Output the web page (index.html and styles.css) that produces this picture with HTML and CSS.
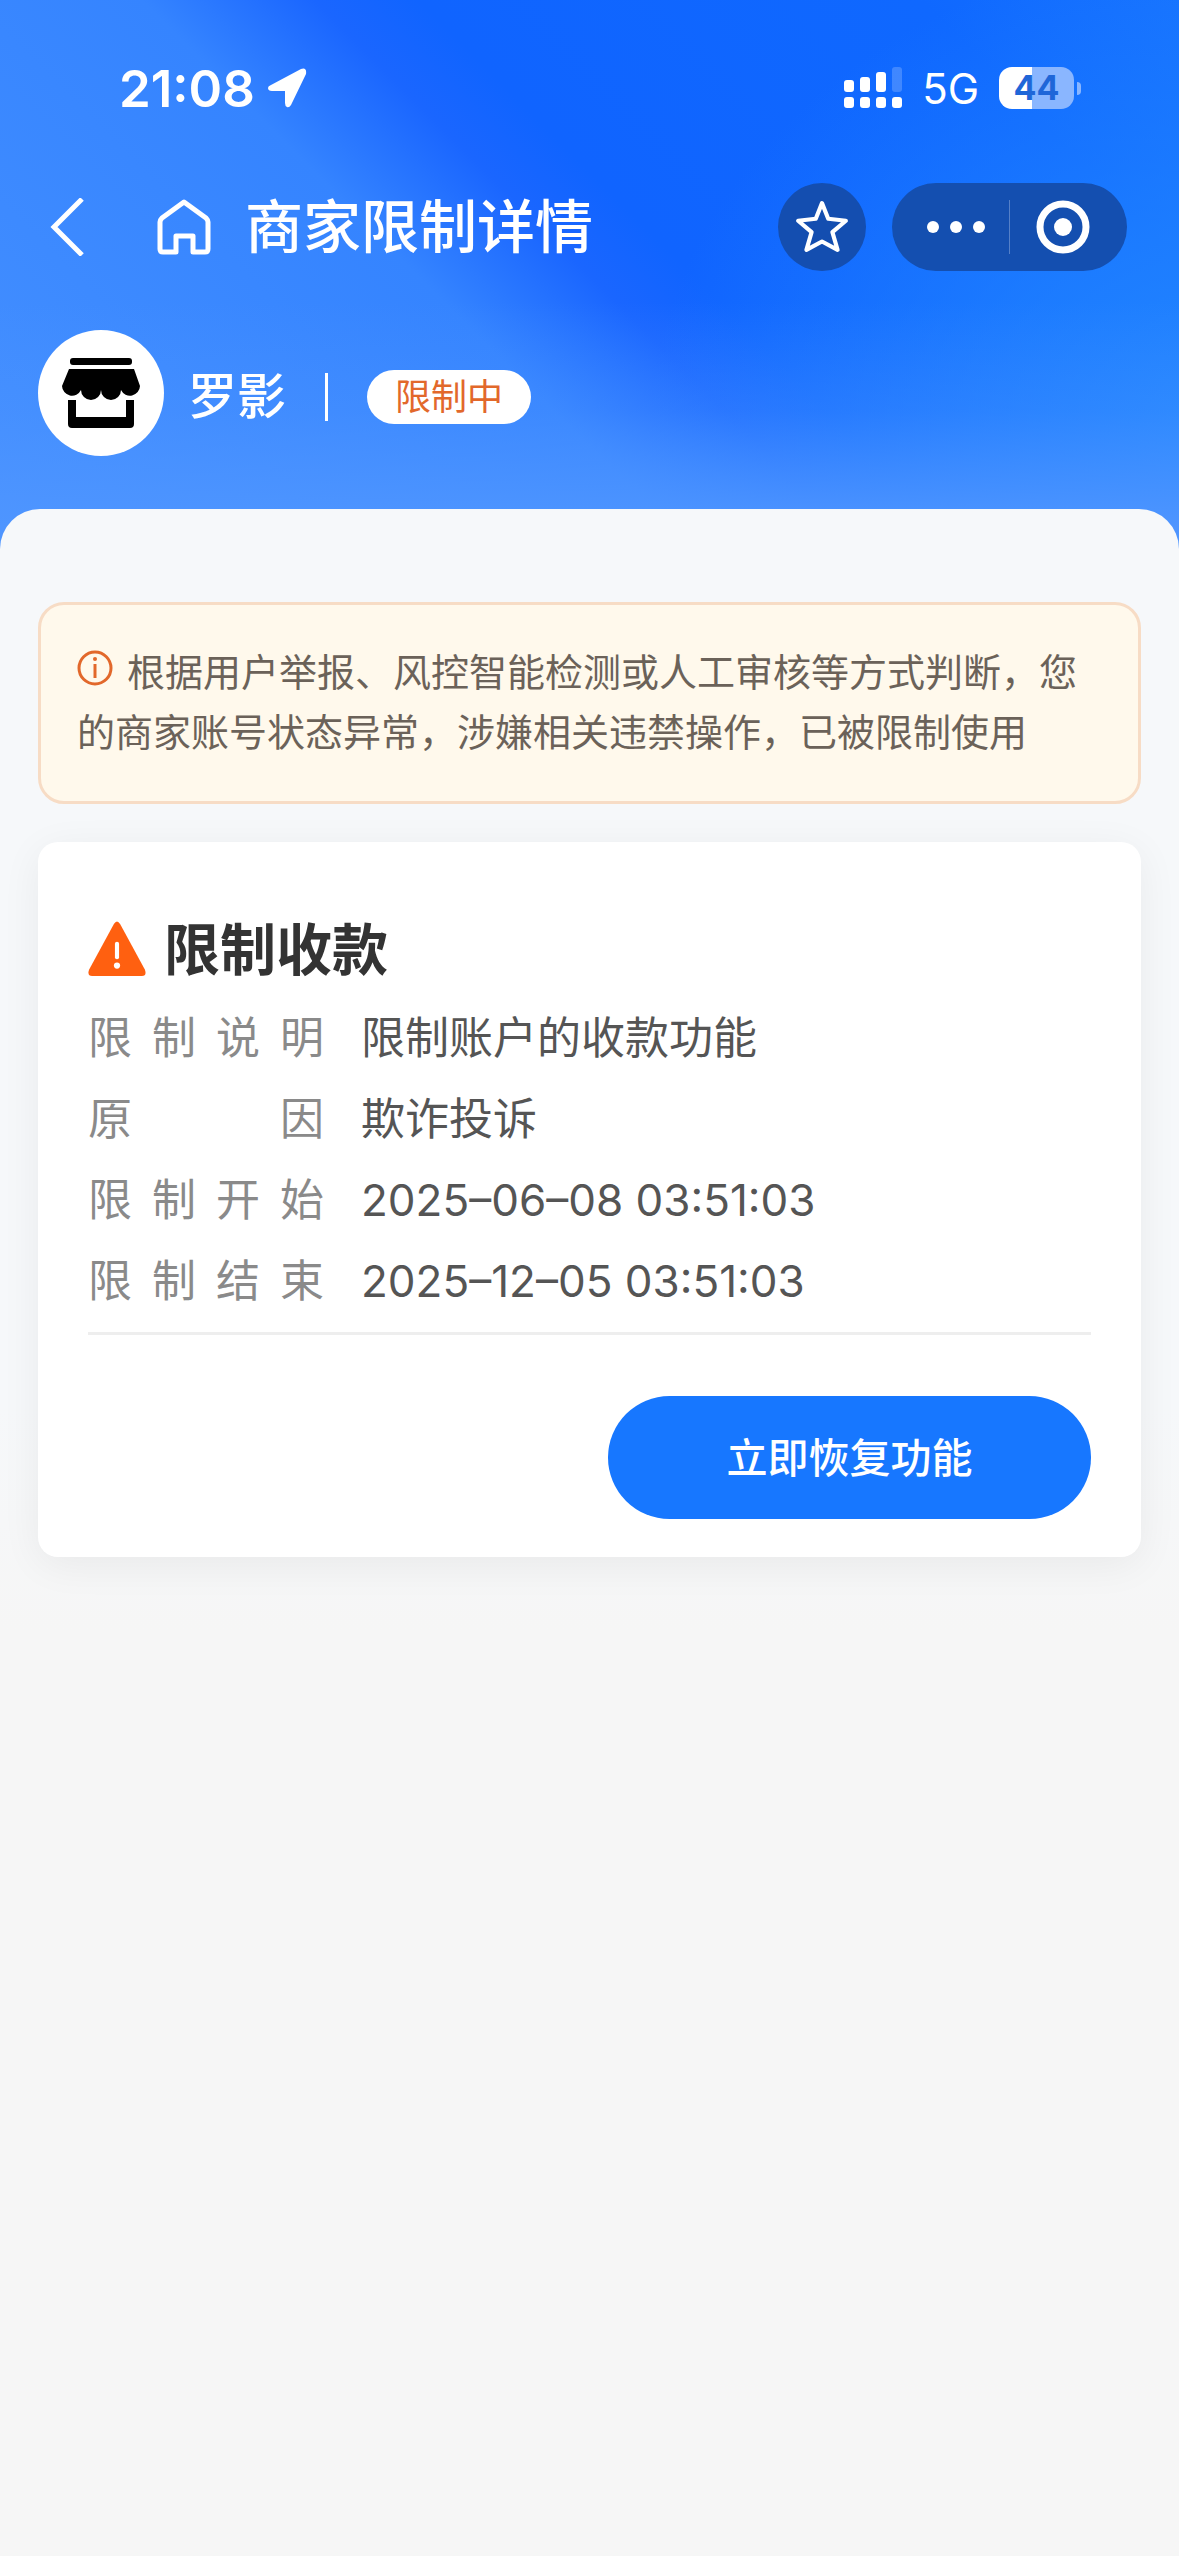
FILE: index.html
```html
<!DOCTYPE html>
<html lang="zh-CN">
<head>
  <meta charset="UTF-8">
  <meta name="viewport" content="width=device-width, initial-scale=1.0">
  <title>商家限制详情</title>
  <link rel="stylesheet" href="styles.css">
</head>
<body>
  <header class="header">
    <div class="status-bar">
      <div class="status-left">
        <span class="time">21:08</span>
        <svg class="location-icon" viewBox="0 0 40 40" aria-hidden="true">
          <path d="M4 17 L34 1 Q40 -1 39 6 L24 37 Q22 40 20 39 Q18 38 18 35 L18 23 L5 23 Q1 23 1 20 Q1 18 4 17 Z" fill="#fff"/>
        </svg>
      </div>
      <div class="status-right">
        <svg class="signal-icon" viewBox="0 0 58 42" aria-hidden="true">
          <g fill="#fff">
            <rect x="0" y="13" width="10" height="12" rx="3"/>
            <rect x="16" y="10" width="10" height="15" rx="3"/>
            <rect x="32" y="5" width="10" height="20" rx="3"/>
            <rect x="48" y="0" width="10" height="25" rx="3" opacity=".2"/>
            <rect x="0" y="30" width="10" height="11" rx="3"/>
            <rect x="16" y="30" width="10" height="11" rx="3"/>
            <rect x="32" y="30" width="10" height="11" rx="3"/>
            <rect x="48" y="30" width="10" height="11" rx="3"/>
          </g>
        </svg>
        <span class="network">5G</span>
        <div class="battery"><span class="battery-body">44</span><span class="battery-cap"></span></div>
      </div>
    </div>

    <nav class="navbar">
      <button class="icon-btn" aria-label="返回">
        <svg class="back-icon" viewBox="0 0 34 58"><path d="M32 1 L4 29 L32 57" fill="none" stroke="#fff" stroke-width="5"/></svg>
      </button>
      <button class="icon-btn home-btn" aria-label="首页">
        <svg class="home-icon" viewBox="0 0 54 56">
          <path d="M27 3 L49 19 Q51 21 51 23 V50 Q51 53 48 53 H36 V37 H19 V53 H6 Q3 53 3 50 V23 Q3 21 5 19 Z" fill="none" stroke="#fff" stroke-width="5" stroke-linejoin="round"/>
        </svg>
      </button>
      <h1 class="title">商家限制详情</h1>
      <button class="star-btn" aria-label="收藏">
        <svg class="star-icon" viewBox="0 0 52 52">
          <path d="M26 3 L32 18 L49 20 L36 31 L41 48 L26 40 L11 48 L16 31 L3 20 L20 18 Z" fill="none" stroke="#fff" stroke-width="4" stroke-linejoin="round"/>
        </svg>
      </button>
      <div class="capsule">
        <button class="capsule-btn" aria-label="更多">
          <svg class="more-icon" viewBox="0 0 58 12"><g fill="#fff"><circle cx="6" cy="6" r="6"/><circle cx="29" cy="6" r="6"/><circle cx="52" cy="6" r="6"/></g></svg>
        </button>
        <span class="capsule-line"></span>
        <button class="capsule-btn" aria-label="关闭">
          <svg class="close-icon" viewBox="0 0 54 54"><circle cx="27" cy="27" r="23" fill="none" stroke="#fff" stroke-width="7"/><circle cx="27" cy="27" r="9" fill="#fff"/></svg>
        </button>
      </div>
    </nav>

    <div class="profile">
      <div class="avatar">
        <svg class="shop-icon" viewBox="0 0 80 70" aria-hidden="true">
          <rect x="9" y="0" width="62" height="7" rx="3"/>
          <path d="M8 11 H73 L79 28 A10 10 0 0 1 60 32 A10 10 0 0 1 40 32 A10 10 0 0 1 20 32 A10 10 0 0 1 1 28 Z"/>
          <path d="M7 42 H15 V59 H65 V42 H73 V66 Q73 70 69 70 H11 Q7 70 7 66 Z"/>
        </svg>
      </div>
      <div class="profile-info">
        <span class="name">罗影</span>
        <span class="profile-line"></span>
        <span class="badge">限制中</span>
      </div>
    </div>
  </header>

  <main class="content">
    <p class="notice">
      <svg class="info-icon" viewBox="0 0 36 36" aria-hidden="true"><circle cx="18" cy="18" r="16" fill="none" stroke="#e2682b" stroke-width="3"/><circle cx="18" cy="9" r="2" fill="#e2682b"/><path d="M18 14 V28" stroke="#e2682b" stroke-width="3"/></svg>根据用户举报、风控智能检测或人工审核等方式判断，您的商家账号状态异常，涉嫌相关违禁操作，已被限制使用
    </p>

    <section class="card">
      <h2 class="card-title">
        <svg class="warn-icon" viewBox="0 0 56 56" aria-hidden="true">
          <path d="M25 3 Q28 -2 31 3 L55 47 Q57 53 52 53 H4 Q-1 53 1 47 Z" fill="#ff6010"/>
          <path d="M28 22 V35" stroke="#fff" stroke-width="4" stroke-linecap="round"/><circle cx="28" cy="43" r="3" fill="#fff"/>
        </svg>
        限制收款
      </h2>
      <dl class="details">
        <dt>限制说明</dt>
        <dd>限制账户的收款功能</dd>
        <dt>原因</dt>
        <dd>欺诈投诉</dd>
        <dt>限制开始</dt>
        <dd>2025–06–08 03:51:03</dd>
        <dt>限制结束</dt>
        <dd>2025–12–05 03:51:03</dd>
      </dl>
      <div class="card-footer">
        <button class="restore-btn">立即恢复功能</button>
      </div>
    </section>
  </main>
</body>
</html>
```
FILE: styles.css
```css
* {
  box-sizing: border-box;
}
body {
  margin: 0;
  background-color: #f6f6f6;
  font-family: Inter, "Noto Sans CJK SC", sans-serif;
  color: #555;
}
button {
  border: none;
  padding: 0;
  background: none;
  font-family: inherit;
  color: #fff;
  cursor: pointer;
}
svg {
  display: block;
}

/* Header */
.header {
  padding-bottom: 93px;
  color: #fff;
  background:
    linear-gradient(to bottom, rgba(78, 149, 255, 0) 55%, rgba(78, 149, 255, 0.3) 75%, #4e95ff 96%),
    radial-gradient(ellipse 50% 90% at 105% 80%, #2488ff 0%, rgba(36, 136, 255, 0.6) 45%, rgba(36, 136, 255, 0) 100%),
    linear-gradient(45deg, #4590ff 0%, #3584ff 40%, #1a66ff 50%, #1064ff 56%, #0f68ff 85%, #1672ff 100%);
}
.status-bar {
  display: flex;
  align-items: center;
  justify-content: space-between;
  height: 176px;
  padding: 0 98px 0 119px;
}
.status-left, .status-right {
  display: flex;
  align-items: center;
}
.status-left {
  gap: 12px;
}
.status-right {
  gap: 20px;
}
.time {
  font-size: 51px;
  font-weight: 600;
}
.location-icon {
  width: 40px;
  height: 40px;
}
.signal-icon {
  width: 58px;
  height: 42px;
}
.network {
  font-size: 42px;
}
.battery {
  display: flex;
  align-items: center;
  gap: 3px;
}
.battery-body {
  width: 75px;
  height: 42px;
  border-radius: 13px;
  background: linear-gradient(to right, #fff 44%, #8ab6ff 44%);
  color: #1f66d8;
  font-size: 34px;
  font-weight: 700;
  line-height: 42px;
  text-align: center;
}
.battery-cap {
  width: 4px;
  height: 13px;
  border-radius: 0 4px 4px 0;
  background-color: #8ab6ff;
}

.navbar {
  display: flex;
  align-items: center;
  margin-top: 7px;
  padding: 0 52px 0 50px;
}
.back-icon {
  width: 34px;
  height: 58px;
}
.home-btn {
  margin-left: 73px;
}
.home-icon {
  width: 54px;
  height: 56px;
}
.title {
  flex: 1;
  margin: 0 0 0 34px;
  font-size: 58px;
  font-weight: 500;
  line-height: 88px;
}
.star-btn {
  display: flex;
  align-items: center;
  justify-content: center;
  width: 88px;
  height: 88px;
  border-radius: 50%;
  background-color: #144eb0;
}
.star-icon {
  width: 54px;
  height: 54px;
}
.capsule {
  display: flex;
  align-items: center;
  width: 235px;
  height: 88px;
  margin-left: 26px;
  padding: 0 11px;
  border-radius: 44px;
  background-color: #144fb0;
}
.capsule-btn {
  display: flex;
  flex: 1;
  align-items: center;
  justify-content: center;
  height: 100%;
}
.capsule-line {
  width: 1px;
  height: 54px;
  background-color: #5580c8;
}
.more-icon {
  width: 58px;
  height: 12px;
}
.close-icon {
  width: 54px;
  height: 54px;
}

.profile {
  display: flex;
  align-items: center;
  gap: 24px;
  margin-top: 59px;
  padding: 0 38px;
}
.avatar {
  display: flex;
  align-items: center;
  justify-content: center;
  width: 126px;
  height: 126px;
  border-radius: 50%;
  background-color: #fff;
}
.shop-icon {
  width: 80px;
  height: 70px;
}
.profile-info {
  display: flex;
  align-items: center;
  gap: 39px;
  padding-top: 8px;
}
.name {
  font-size: 49px;
  font-weight: 500;
  line-height: 54px;
}
.profile-line {
  width: 3px;
  height: 48px;
  background-color: #fff;
}
.badge {
  padding: 0 28px;
  border-radius: 27px;
  background-color: #fff;
  color: #e2682b;
  font-size: 36px;
  line-height: 54px;
}

/* Content sheet */
.content {
  margin-top: -40px;
  padding: 93px 38px 76px;
  border-radius: 40px 40px 0 0;
  background: linear-gradient(to bottom, #f6f8fa, #f6f8fa 80%, #f6f6f6);
}
.notice {
  margin: 0 0 38px;
  padding: 37px 36px 39px;
  border: 3px solid #f7dcc5;
  border-radius: 26px;
  background-color: #fff9ec;
  color: #6b6259;
  font-size: 38px;
  line-height: 60px;
}
.info-icon {
  display: inline-block;
  width: 36px;
  height: 36px;
  margin-right: 14px;
}
.card {
  padding: 72px 50px 38px;
  border-radius: 20px;
  background-color: #fff;
  box-shadow: 0 8px 40px rgba(0, 0, 0, 0.06);
}
.card-title {
  display: flex;
  align-items: center;
  gap: 18px;
  margin: 0 0 12px;
  color: #333;
  font-size: 56px;
  font-weight: 700;
  line-height: 72px;
}
.warn-icon {
  width: 58px;
  height: 58px;
}
.details {
  display: grid;
  grid-template-columns: 236px 1fr;
  column-gap: 37px;
  margin: 0;
  padding-bottom: 10px;
  border-bottom: 3px solid #eee;
  font-size: 44px;
  line-height: 81px;
}
.details dt {
  color: #8a8a8a;
  text-align-last: justify;
}
.details dd {
  margin: 0;
}
.card-footer {
  display: flex;
  justify-content: flex-end;
  margin-top: 61px;
}
.restore-btn {
  width: 483px;
  height: 123px;
  padding-bottom: 6px;
  border-radius: 62px;
  background-color: #1777ff;
  font-size: 41px;
  font-weight: 500;
}
```
